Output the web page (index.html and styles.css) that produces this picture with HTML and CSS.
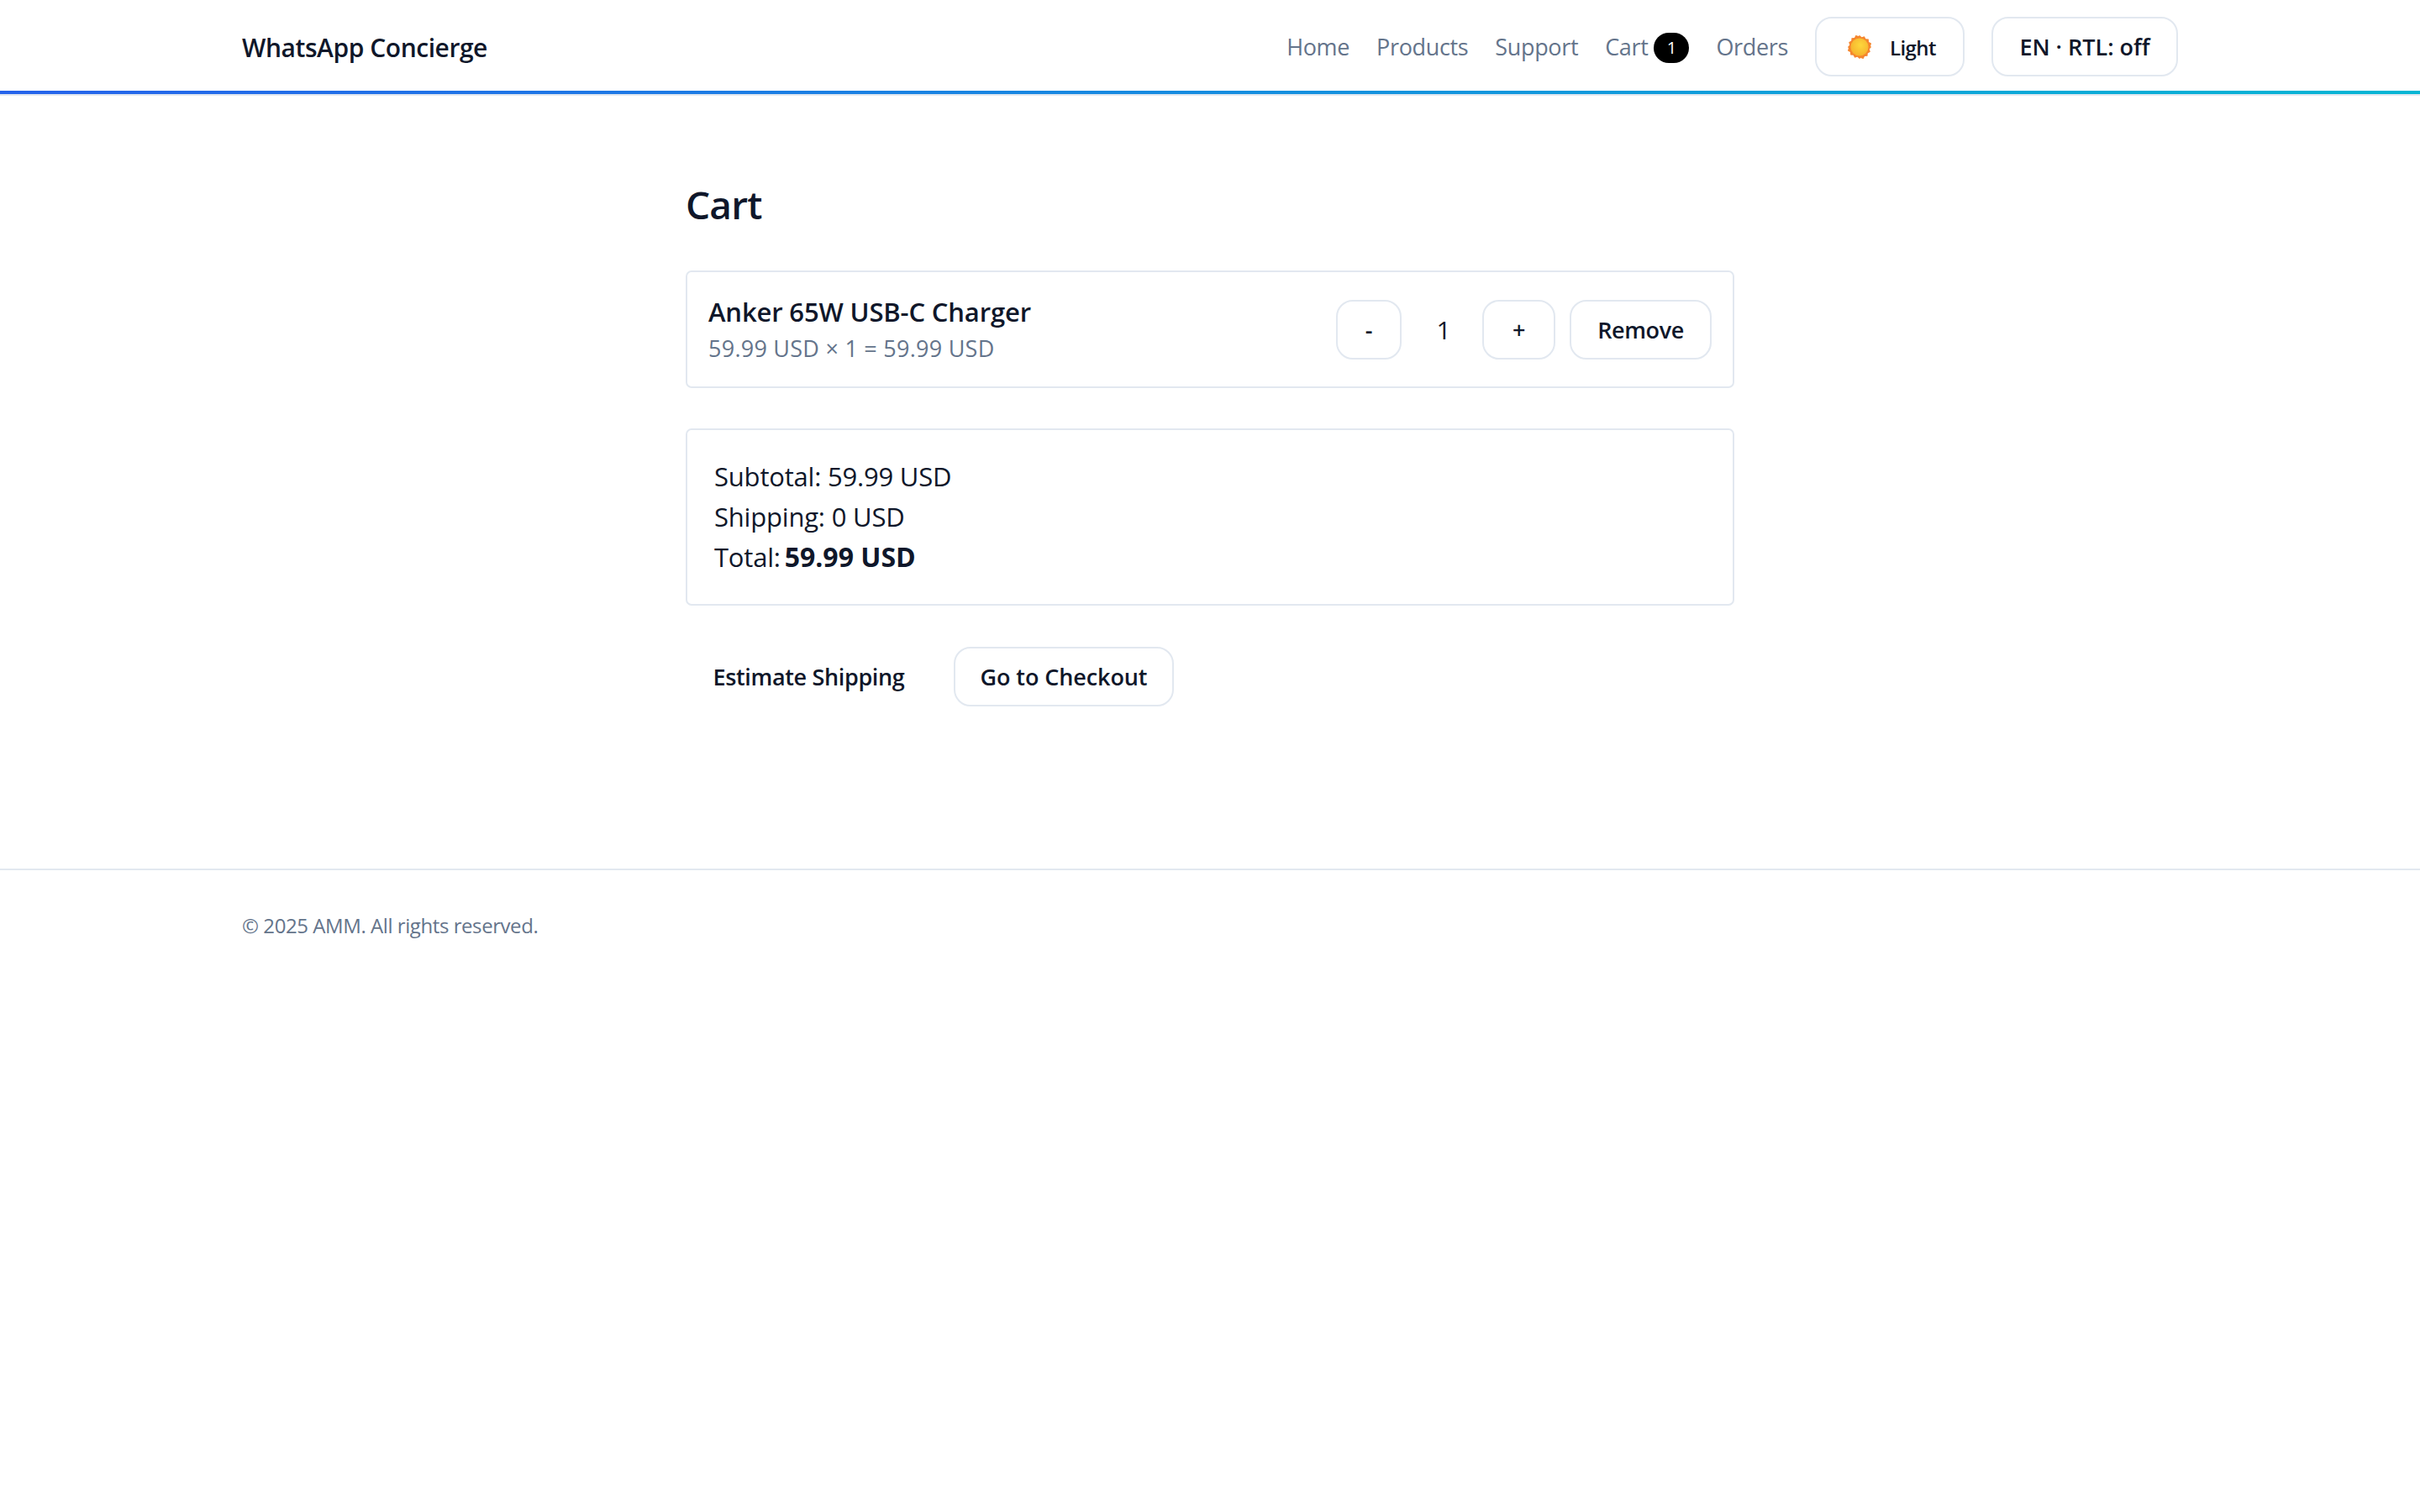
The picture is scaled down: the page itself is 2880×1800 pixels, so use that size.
FILE: index.html
```html
<!DOCTYPE html>
<html lang="en">
<head>
  <meta charset="UTF-8" />
  <meta name="viewport" content="width=device-width, initial-scale=1.0" />
  <title>WhatsApp Concierge</title>
  <link rel="stylesheet" href="styles.css">
</head>
<body>
  <header class="topbar">
    <div class="wrap topbar-inner">
      <a class="brand">WhatsApp Concierge</a>
      <nav class="nav">
        <a>Home</a>
        <a>Products</a>
        <a>Support</a>
        <a class="cart-link">Cart <span class="badge">1</span></a>
        <a>Orders</a>
        <button class="btn btn-theme">
          <svg class="sun" viewBox="0 0 28 28" aria-hidden="true">
            <defs>
              <radialGradient id="sunFill" cx="55%" cy="40%" r="65%">
                <stop offset="0%" stop-color="#fdd73c" />
                <stop offset="100%" stop-color="#f6b02c" />
              </radialGradient>
            </defs>
            <path fill="#f5862e" d="M14 0l2.6 2.2 3.2-1 1.6 3 3.4.3.3 3.4 3 1.6-1 3.2L28 14l-2.2 2.6 1 3.2-3 1.6-.3 3.4-3.4.3-1.6 3-3.2-1L14 28l-2.6-2.2-3.2 1-1.6-3-3.4-.3-.3-3.4-3-1.6 1-3.2L0 14l2.2-2.6-1-3.2 3-1.6.3-3.4 3.4-.3 1.6-3 3.2 1z" />
            <circle cx="14" cy="14" r="10.5" fill="url(#sunFill)" />
          </svg>
          <span class="theme-label">Light</span>
        </button>
        <button class="btn btn-lang">EN · RTL: off</button>
      </nav>
    </div>
  </header>

  <main class="cart">
    <h1>Cart</h1>

    <section class="card cart-item">
      <div>
        <div class="item-name">Anker 65W USB-C Charger</div>
        <div class="item-price">59.99 USD × 1 = 59.99 USD</div>
      </div>
      <div class="item-controls">
        <button class="btn btn-minus">-</button>
        <span class="qty">1</span>
        <button class="btn btn-plus">+</button>
        <button class="btn btn-remove">Remove</button>
      </div>
    </section>

    <section class="card totals">
      <div>Subtotal: 59.99 USD</div>
      <div>Shipping: 0 USD</div>
      <div>Total: <strong>59.99 USD</strong></div>
    </section>

    <div class="actions">
      <button class="btn btn-ghost">Estimate Shipping</button>
      <button class="btn btn-checkout">Go to Checkout</button>
    </div>
  </main>

  <footer class="footer">
    <div class="wrap">© 2025 AMM. All rights reserved.</div>
  </footer>
</body>
</html>
```
FILE: styles.css
```css
* {
  box-sizing: border-box;
}
body {
  margin: 0;
  font-family: "Open Sans", "Noto Sans", sans-serif;
  background: #fff;
  color: #0f172a;
}
.wrap {
  width: 2304px;
  margin: 0 auto;
}

/* header */
.topbar {
  height: 114px;
  border-bottom: 2px solid #e2e8f0;
  position: relative;
}
.topbar::after {
  content: "";
  position: absolute;
  left: 0;
  right: 0;
  bottom: 0;
  height: 4px;
  background: linear-gradient(90deg, #2563eb, #06b6d4);
}
.topbar-inner {
  display: flex;
  align-items: flex-start;
  justify-content: space-between;
  padding-top: 20px;
}
.brand {
  font-size: 30px;
  font-weight: 600;
  line-height: 74px;
  letter-spacing: -0.45px;
}
.nav {
  display: flex;
  align-items: center;
  gap: 32px;
  height: 71px;
  font-size: 27px;
  letter-spacing: -0.35px;
  color: #64748b;
}
.cart-link {
  display: flex;
  align-items: center;
  gap: 7px;
}
.badge {
  width: 42px;
  height: 36px;
  margin-top: 2px;
  border-radius: 18px;
  background: #000;
  color: #fff;
  font-size: 20px;
  letter-spacing: 0;
  text-align: center;
  line-height: 36px;
}

/* buttons */
.btn {
  height: 71px;
  padding: 0 32px;
  border: 2.5px solid #e2e8f0;
  border-radius: 20px;
  background: #fff;
  color: #0f172a;
  font-family: inherit;
  font-size: 27px;
  font-weight: 600;
  letter-spacing: -0.4px;
}
.btn-theme {
  display: flex;
  align-items: center;
  gap: 22px;
  width: 178px;
  padding: 0 0 0 37px;
  font-size: 24px;
  letter-spacing: -0.6px;
}
.theme-label {
  margin-top: 2px;
}
.btn-lang {
  width: 222px;
  padding: 0;
  letter-spacing: 0;
}
.sun {
  width: 28px;
  height: 28px;
  flex: none;
}

/* cart */
.cart {
  width: 1248px;
  margin: 0 auto;
  padding-top: 99px;
}
h1 {
  margin: 0 0 49px;
  font-size: 46px;
  font-weight: 600;
  line-height: 60px;
  letter-spacing: -0.8px;
}
.card {
  border: 2.5px solid #e2e8f0;
  border-radius: 7px;
  background: #fff;
}
.cart-item {
  display: flex;
  align-items: center;
  justify-content: space-between;
  height: 140px;
  padding: 0 25px;
}
.item-name {
  font-size: 31px;
  font-weight: 600;
  line-height: 44px;
  letter-spacing: -0.15px;
}
.item-price {
  margin-top: 2px;
  font-size: 27px;
  line-height: 40px;
  letter-spacing: 0.25px;
  color: #64748b;
}
.item-controls {
  display: flex;
  align-items: center;
  gap: 17px;
}
.qty {
  width: 62px;
  margin-left: 2px;
  margin-right: -2px;
  text-align: center;
  font-size: 30px;
}
.btn-minus {
  width: 78px;
  padding: 0;
}
.btn-plus {
  width: 87px;
  padding: 0;
}
.btn-remove {
  width: 169px;
  padding: 0;
}
.totals {
  height: 211px;
  margin-top: 48px;
  padding: 31px 32px;
  font-size: 31px;
  line-height: 48px;
  letter-spacing: -0.2px;
}
.totals strong {
  font-weight: 700;
  font-size: 32px;
  letter-spacing: 0;
  margin-left: -3px;
}
.actions {
  display: flex;
  gap: 26px;
  margin-top: 49px;
}
.btn-ghost {
  width: 293px;
  padding: 0;
  border-color: transparent;
  letter-spacing: -0.35px;
}
.btn-checkout {
  width: 262px;
  padding: 0;
  letter-spacing: -0.1px;
}

/* footer */
.footer {
  margin-top: 193px;
  padding-top: 48px;
  border-top: 2px solid #e2e8f0;
  font-size: 24px;
  line-height: 36px;
  letter-spacing: -0.43px;
  color: #64748b;
}
```
